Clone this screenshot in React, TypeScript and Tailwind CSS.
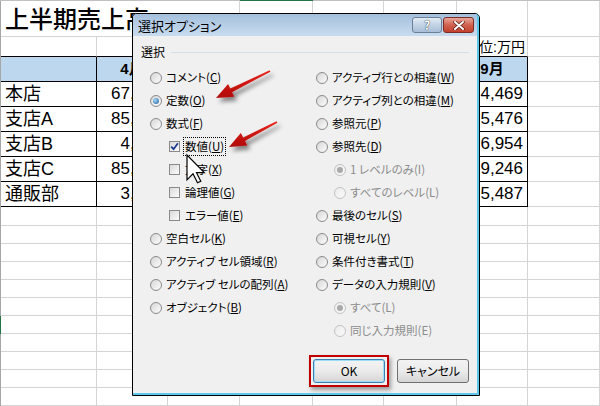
import React from "react";

const SHEET_FONT = "font-['Liberation_Sans','Noto_Sans_CJK_JP',sans-serif]";
const UI_FONT = "font-['Noto_Sans_CJK_JP',sans-serif] [font-feature-settings:'palt']";

const colWidths = [96, 71, 72, 73, 71, 73, 71, 72];

const stores = [
  { name: "本店", values: ["67,450", "5,120", "4,870", "4,990", "5,230", "4,469"] },
  { name: "支店A", values: ["85,210", "5,640", "5,310", "5,820", "5,700", "5,476"] },
  { name: "支店B", values: ["4,980", "6,720", "6,430", "7,010", "6,880", "6,954"] },
  { name: "支店C", values: ["85,630", "9,010", "8,870", "9,420", "9,150", "9,246"] },
  { name: "通販部", values: ["3,870", "5,220", "5,340", "5,610", "5,390", "5,487"] },
];

const months = ["4月", "5月", "6月", "7月", "8月", "9月"];

// plain gridline cell
function Cell({ w, h, children, className = "" }: { w: number; h: number; children?: React.ReactNode; className?: string }) {
  return (
    <div
      className={`shrink-0 box-border border-r border-b border-[#d4d4d4] overflow-hidden ${className}`}
      style={{ width: w, height: h }}
    >
      {children}
    </div>
  );
}

function LeftEdge({ h, green = false }: { h: number; green?: boolean }) {
  return <div className={`w-[1px] shrink-0 ${green ? "bg-[#217346]" : "bg-[#a6a6a6]"}`} style={{ height: h }} />;
}

function Sheet() {
  const emptyRows = [19, 18, 18, 18, 18, 18, 18, 18, 18, 18, 18];
  return (
    <div className={`flex flex-col w-[600px] h-[406px] overflow-hidden bg-white text-black ${SHEET_FONT}`}>
      {/* column header edge */}
      <div className="flex h-[2px] bg-[#c0c0c0]">
        <div className="w-[240px]" />
        <div className="w-[73px] bg-[#217346]" />
      </div>

      {/* title row */}
      <div className="flex">
        <LeftEdge h={36} />
        <div className="shrink-0 w-[239px] h-[36px] border-r border-b border-[#d4d4d4] box-border flex items-center pl-[4px] pt-[3px] text-[24px] whitespace-nowrap font-medium">
          上半期売上高
        </div>
        {colWidths.slice(3).map((w, i) => (
          <Cell key={i} w={w} h={36} />
        ))}
      </div>

      {/* unit row */}
      <div className="flex">
        <LeftEdge h={20} />
        {colWidths.map((w, i) => (
          <Cell key={i} w={w} h={20} className={i < 7 ? "border-b-black" : ""}>
            {i === 6 && (
              <div className="h-full flex items-end justify-end pr-[2px] text-[14px] leading-[18px] whitespace-nowrap">
                単位:万円
              </div>
            )}
          </Cell>
        ))}
      </div>

      {/* header row */}
      <div className="flex">
        <LeftEdge h={25} />
        {colWidths.map((w, i) =>
          i < 7 ? (
            <div
              key={i}
              className="shrink-0 h-[25px] box-border border-r border-b border-black bg-[#bdd7ee] flex items-end justify-center pb-[1px] text-[15px] font-bold"
              style={{ width: w }}
            >
              {i > 0 ? months[i - 1] : ""}
            </div>
          ) : (
            <Cell key={i} w={w} h={25} />
          )
        )}
      </div>

      {/* data rows */}
      {stores.map((s) => (
        <div key={s.name} className="flex">
          <LeftEdge h={25} />
          <div className="shrink-0 w-[96px] h-[25px] box-border border-r border-b border-black flex items-center pl-[4px] text-[18px]">
            {s.name}
          </div>
          {s.values.map((v, i) => (
            <div
              key={i}
              className="shrink-0 h-[25px] box-border border-r border-b border-black flex items-center justify-end pr-[4px] text-[17px]"
              style={{ width: colWidths[i + 1] }}
            >
              {v}
            </div>
          ))}
          <Cell w={72} h={25} />
        </div>
      ))}

      {/* empty rows */}
      {emptyRows.map((h, r) => (
        <div key={r} className="flex">
          <LeftEdge h={h} green={r === 6} />
          {colWidths.map((w, i) => (
            <Cell key={i} w={w} h={h} />
          ))}
        </div>
      ))}
    </div>
  );
}

function Radio({ checked = false, disabled = false }: { checked?: boolean; disabled?: boolean }) {
  return (
    <span
      className={`shrink-0 flex items-center justify-center w-[12px] h-[12px] rounded-full border box-border ${
        disabled
          ? "border-[#c2c2c2] bg-gradient-to-br from-[#ececec] to-[#fafafa]"
          : "border-[#8a8a8a] bg-gradient-to-br from-[#d6d6d6] to-[#fdfdfd]"
      }`}
    >
      {checked && (
        <span
          className={`w-[6px] h-[6px] rounded-full ${
            disabled ? "bg-[#a9a9a9]" : "bg-[radial-gradient(circle_at_35%_35%,#a6d8f7,#1b5e9b)]"
          }`}
        />
      )}
    </span>
  );
}

function Check({ checked = false }: { checked?: boolean }) {
  return (
    <span className="shrink-0 flex items-center justify-center w-[11px] h-[11px] border border-[#8a8a8a] box-border bg-gradient-to-br from-[#dadada] to-[#fcfcfc]">
      {checked && (
        <svg width="9" height="9" viewBox="0 0 9 9">
          <path d="M1.2 4.6 L3.6 7.2 L7.9 1.2" fill="none" stroke="#1c3b8f" strokeWidth="1.8" />
        </svg>
      )}
    </span>
  );
}

type OptProps = {
  kind: "radio" | "check";
  label: string;
  k: string;
  checked?: boolean;
  disabled?: boolean;
  indent?: boolean;
  focus?: boolean;
};

function Opt({ kind, label, k, checked, disabled, indent, focus }: OptProps) {
  const text = (
    <span className={`whitespace-nowrap ${disabled ? "text-[#8c8c8c]" : "text-black"}`}>
      {label}(
      {disabled ? k : <span className="underline underline-offset-[1px]">{k}</span>})
    </span>
  );
  if (kind === "check") {
    return (
      <div className="h-[23px] flex items-center gap-[3px] pl-[19px]">
        <Check checked={checked} />
        <span className={`px-[1px] border ${focus ? "border-dotted border-black" : "border-transparent"}`}>{text}</span>
      </div>
    );
  }
  return (
    <div className={`h-[23px] flex items-center gap-[4px] ${indent ? "pl-[18px]" : ""}`}>
      <Radio checked={checked} disabled={disabled} />
      {text}
    </div>
  );
}

function Button({ children, primary = false }: { children: React.ReactNode; primary?: boolean }) {
  return (
    <div
      className={`w-[72px] h-[24px] rounded-[3px] border box-border flex items-center justify-center text-[12px] text-black bg-gradient-to-b from-[#f3f3f3] via-[#ebebeb] to-[#d5d5d5] ${
        primary ? "border-[#3c7fb1] shadow-[inset_0_0_0_1px_#9fdcf5]" : "border-[#707070]"
      }`}
    >
      {children}
    </div>
  );
}

function Dialog() {
  return (
    <div className={`absolute left-[132px] top-[13px] w-[348px] h-[383px] border border-black rounded-t-[5px] bg-[#f0f0f0] flex flex-col text-[11.5px] ${UI_FONT}`}>
      {/* title bar */}
      <div className="h-[22px] shrink-0 rounded-t-[4px] border-r-2 border-[#5ec8ec] bg-gradient-to-b from-[#a5c0dd] to-[#c9dcef] flex items-start justify-between">
        <span className="pl-[5px] pt-[2px] text-[13px] text-black">選択オプション</span>
        <div className="flex gap-[1px] pt-[3px] pr-[3px]">
          <div className="w-[30px] h-[16px] rounded-[3px] border border-[#6d7f94] bg-gradient-to-b from-[#e3ecf5] via-[#c2d3e5] to-[#a9bfd6] flex items-center justify-center text-[12px] font-bold leading-none text-white [text-shadow:0_0_1px_#2b3a4f,0_0_1px_#2b3a4f]">
            ?
          </div>
          <div className="w-[31px] h-[16px] rounded-[3px] border border-[#7c2c22] bg-gradient-to-b from-[#e8a79c] via-[#d0614f] to-[#c2402c] flex items-center justify-center">
            <svg width="12" height="9" viewBox="0 0 12 9">
              <path d="M2 1 L10 8 M10 1 L2 8" stroke="#5a1a12" strokeWidth="3.4" strokeLinecap="round" />
              <path d="M2 1 L10 8 M10 1 L2 8" stroke="#ffffff" strokeWidth="2" strokeLinecap="round" />
            </svg>
          </div>
        </div>
      </div>

      {/* body */}
      <div className="flex-1 flex flex-col border-r-2 border-b-2 border-[#5ec8ec]">
        <div className="mt-[8px] h-[16px] pl-[8px] flex items-center gap-[6px] text-[12px]">
          <span>選択</span>
          <div className="flex-1 h-px bg-[#d5dfe6] mr-[8px]" />
        </div>

        <div className="mt-[6px] pl-[17px] grid grid-cols-[166px_1fr]">
          <div className="flex flex-col">
            <Opt kind="radio" label="コメント" k="C" />
            <Opt kind="radio" label="定数" k="O" checked />
            <Opt kind="radio" label="数式" k="F" />
            <Opt kind="check" label="数値" k="U" checked focus />
            <Opt kind="check" label="文字" k="X" />
            <Opt kind="check" label="論理値" k="G" />
            <Opt kind="check" label="エラー値" k="E" />
            <Opt kind="radio" label="空白セル" k="K" />
            <Opt kind="radio" label="アクティブ セル領域" k="R" />
            <Opt kind="radio" label="アクティブ セルの配列" k="A" />
            <Opt kind="radio" label="オブジェクト" k="B" />
          </div>
          <div className="flex flex-col">
            <Opt kind="radio" label="アクティブ行との相違" k="W" />
            <Opt kind="radio" label="アクティブ列との相違" k="M" />
            <Opt kind="radio" label="参照元" k="P" />
            <Opt kind="radio" label="参照先" k="D" />
            <Opt kind="radio" label="1 レベルのみ" k="I" checked disabled indent />
            <Opt kind="radio" label="すべてのレベル" k="L" disabled indent />
            <Opt kind="radio" label="最後のセル" k="S" />
            <Opt kind="radio" label="可視セル" k="Y" />
            <Opt kind="radio" label="条件付き書式" k="T" />
            <Opt kind="radio" label="データの入力規則" k="V" />
            <Opt kind="radio" label="すべて" k="L" checked disabled indent />
            <Opt kind="radio" label="同じ入力規則" k="E" disabled indent />
          </div>
        </div>

        <div className="mt-[13px] flex justify-end items-start gap-[8px] pr-[8px]">
          <div className="border-2 border-[#c00000] p-[2px] shadow-[2px_3px_4px_rgba(0,0,0,0.35)]">
            <Button primary>OK</Button>
          </div>
          <div className="mt-[4px]">
            <Button>キャンセル</Button>
          </div>
        </div>
      </div>
    </div>
  );
}

function arrowPoints(tx: number, ty: number, px: number, py: number) {
  const dx = px - tx;
  const dy = py - ty;
  const len = Math.hypot(dx, dy);
  const ux = dx / len;
  const uy = dy / len;
  const nx = -uy;
  const ny = ux;
  const bx = px - ux * 17;
  const by = py - uy * 17;
  const pts = [
    [tx + nx * 0.8, ty + ny * 0.8],
    [bx + nx * 2, by + ny * 2],
    [bx + nx * 7, by + ny * 7],
    [px, py],
    [bx - nx * 7, by - ny * 7],
    [bx - nx * 2, by - ny * 2],
    [tx - nx * 0.8, ty - ny * 0.8],
  ];
  return pts.map((p) => `${p[0].toFixed(1)},${p[1].toFixed(1)}`).join(" ");
}

function Overlay() {
  const cur = [
    [0, 0], [0, 24.8], [6, 18.8], [10.5, 27.8], [13.8, 26.3], [9.5, 17.7], [17.3, 17.7],
  ]
    .map(([x, y]) => `${187 + x},${155 + y}`)
    .join(" ");
  return (
    <svg className="absolute inset-0 pointer-events-none" width="600" height="406" viewBox="0 0 600 406">
      <defs>
        <linearGradient id="red" x1="0" y1="0" x2="0" y2="1">
          <stop offset="0" stopColor="#e8261e" />
          <stop offset="1" stopColor="#b00808" />
        </linearGradient>
        <filter id="sh" x="-30%" y="-30%" width="160%" height="160%">
          <feDropShadow dx="3" dy="4" stdDeviation="2" floodColor="#000" floodOpacity="0.45" />
        </filter>
      </defs>
      <polygon points={arrowPoints(270, 71, 216, 98)} fill="url(#red)" filter="url(#sh)" />
      <polygon points={arrowPoints(277, 122, 229, 147)} fill="url(#red)" filter="url(#sh)" />
      <polygon points={cur} fill="#fff" stroke="#000" strokeWidth="1.2" strokeLinejoin="miter" />
    </svg>
  );
}

export default function App() {
  return (
    <div className="relative w-[600px] h-[406px] overflow-hidden bg-white">
      <Sheet />
      <Dialog />
      <Overlay />
    </div>
  );
}
